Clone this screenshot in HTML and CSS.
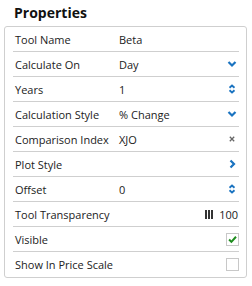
FILE: index.html
```html
<!DOCTYPE html>
<html>
<head>
<meta charset="utf-8">
<link rel="stylesheet" href="styles.css">
</head>
<body>
<h1 class="title">Properties</h1>
<div class="panel">
  <div class="row"><span class="label">Tool Name</span><span class="value">Beta</span></div>
  <div class="row"><span class="label">Calculate On</span><span class="value">Day</span>
    <svg class="icon" viewBox="0 0 10 10"><path d="M1.5 3 L5 6.5 L8.5 3" fill="none" stroke="#1a73c0" stroke-width="2.2"/></svg></div>
  <div class="row"><span class="label">Years</span><span class="value">1</span>
    <svg class="icon" viewBox="0 0 10 12"><path d="M2 4.5 L5 1.8 L8 4.5 M2 7.5 L5 10.2 L8 7.5" fill="none" stroke="#1a73c0" stroke-width="2.2"/></svg></div>
  <div class="row"><span class="label">Calculation Style</span><span class="value">% Change</span>
    <svg class="icon" viewBox="0 0 10 10"><path d="M1.5 3 L5 6.5 L8.5 3" fill="none" stroke="#1a73c0" stroke-width="2.2"/></svg></div>
  <div class="row"><span class="label">Comparison Index</span><span class="value">XJO</span>
    <svg class="icon" viewBox="0 0 10 10"><path d="M2.8 2.8 L7.2 7.2 M7.2 2.8 L2.8 7.2" fill="none" stroke="#666" stroke-width="1.3"/></svg></div>
  <div class="row"><span class="label">Plot Style</span>
    <svg class="icon" viewBox="0 0 10 10"><path d="M3.5 1.5 L7 5 L3.5 8.5" fill="none" stroke="#1a73c0" stroke-width="2.2"/></svg></div>
  <div class="row"><span class="label">Offset</span><span class="value">0</span>
    <svg class="icon" viewBox="0 0 10 12"><path d="M2 4.5 L5 1.8 L8 4.5 M2 7.5 L5 10.2 L8 7.5" fill="none" stroke="#1a73c0" stroke-width="2.2"/></svg></div>
  <div class="row"><span class="label">Tool Transparency</span>
    <span class="bars"><i></i><i></i><i></i></span><span class="num">100</span></div>
  <div class="row"><span class="label">Visible</span>
    <span class="check"><svg viewBox="0 0 12 12"><path d="M2.3 6 L4.8 8.6 L9.8 3" fill="none" stroke="#1e8c1e" stroke-width="2.2"/></svg></span></div>
  <div class="row"><span class="label">Show In Price Scale</span><span class="check"></span></div>
</div>
</body>
</html>
```
FILE: styles.css
```css
html, body {
  margin: 0;
  padding: 0;
  background: #fff;
}
body {
  font-family: "Open Sans", "Liberation Sans", sans-serif;
  color: #222;
  width: 252px;
  height: 286px;
  overflow: hidden;
}
.title {
  margin: 0;
  padding: 0 0 0 14px;
  height: 26px;
  line-height: 26px;
  font-size: 14px;
  font-weight: 700;
  color: #111;
}
.panel {
  margin-left: 4px;
  border: 1px solid #cfcfcf;
  border-radius: 3px;
  padding: 0 7px 1px 8px;
  box-sizing: content-box;
  width: 226px;
}
.row {
  display: flex;
  align-items: center;
  height: 24px;
  border-bottom: 1px solid #cfcfcf;
  font-size: 11px;
  padding-left: 2px;
  white-space: nowrap;
}
.row:last-child {
  border-bottom: none;
}
.label {
  width: 104px;
  flex: none;
}
.value {
  flex: 1;
}
.icon {
  margin-left: auto;
  width: 10px;
  height: 10px;
  margin-right: 2px;
}
.bars {
  margin-left: auto;
  display: flex;
  gap: 1px;
  margin-right: 6px;
}
.bars i {
  display: block;
  width: 2px;
  height: 9px;
  background: #333;
}
.num {
  margin-right: 1px;
}
.check {
  margin-left: auto;
  width: 11px;
  height: 11px;
  border: 1px solid #c8c8c8;
  display: flex;
}
.check svg {
  width: 11px;
  height: 11px;
}
```
